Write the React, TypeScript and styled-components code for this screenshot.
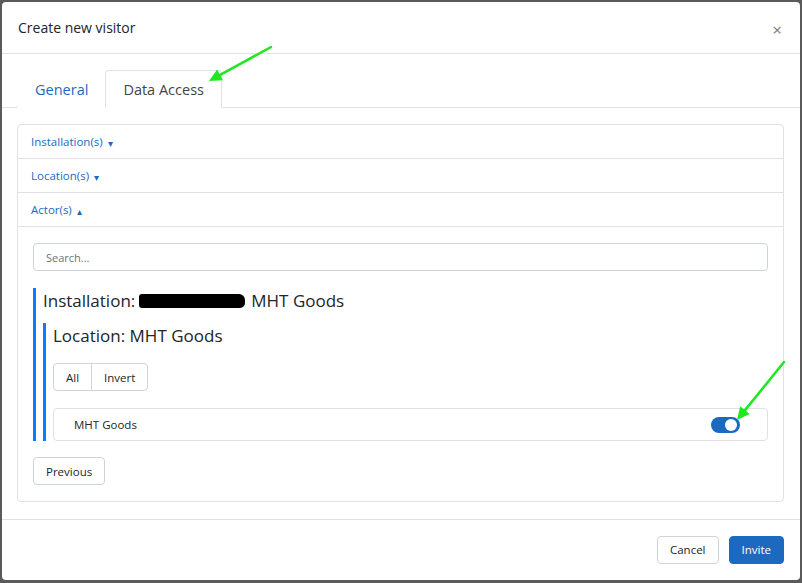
import React from "react";
import styled, { createGlobalStyle } from "styled-components";

const GlobalStyle = createGlobalStyle`
  html, body {
    margin: 0;
    padding: 0;
    background: #5a5a5a;
    font-family: "Open Sans", "Noto Sans", sans-serif;
  }
  * { box-sizing: border-box; }
`;

const BLUE = "#1b6ac0";

const Page = styled.div`
  position: relative;
  width: 802px;
  height: 583px;
  padding: 2px 2px 3px 2px;
`;

const Modal = styled.div`
  width: 798px;
  height: 578px;
  background: #fff;
  border-radius: 4px;
  display: flex;
  flex-direction: column;
  color: #212529;
`;

const Header = styled.div`
  height: 52px;
  padding: 0 16px;
  border-bottom: 1px solid #dee2e6;
  display: flex;
  align-items: center;
  justify-content: space-between;
`;

const Title = styled.div`
  font-size: 14px;
  color: #212529;
`;

const Close = styled.span`
  font-size: 17px;
  color: #7a7a7a;
  line-height: 1;
  margin-right: 2px;
  margin-top: 4px;
`;

const TabNav = styled.div`
  display: flex;
  padding: 16px 16px 0 16px;
  border-bottom: 1px solid #dee2e6;
`;

const Tab = styled.div<{ active?: boolean }>`
  height: 38px;
  margin-bottom: -1px;
  padding: 0 ${({ active }) => (active ? "17px" : "16px")};
  display: flex;
  align-items: center;
  font-size: 14.5px;
  color: ${({ active }) => (active ? "#444" : BLUE)};
  background: #fff;
  border: 1px solid ${({ active }) => (active ? "#dee2e6" : "transparent")};
  border-bottom-color: ${({ active }) => (active ? "#fff" : "transparent")};
  border-radius: 4px 4px 0 0;
`;

const Body = styled.div`
  flex: 1;
  padding: 16px 16px 17px 15px;
`;

const Card = styled.div`
  border: 1px solid #dee2e6;
  border-radius: 4px;
  height: 378px;
`;

const SectionHead = styled.div`
  height: 34px;
  padding: 0 13px;
  display: flex;
  align-items: center;
  gap: 5px;
  font-size: 11.5px;
  color: ${BLUE};
  border-bottom: 1px solid #dee2e6;
`;

const Caret = styled.span`
  font-size: 10px;
  margin-top: 2px;
`;

const SectionBody = styled.div`
  padding: 16px 15px;
`;

const Search = styled.input`
  width: 100%;
  height: 28px;
  border: 1px solid #ced4da;
  border-radius: 4px;
  padding: 0 12px;
  font-family: inherit;
  font-size: 11px;
  outline: none;
  &::placeholder { color: #6c757d; }
`;

const Group = styled.div<{ nested?: boolean }>`
  margin-top: ${({ nested }) => (nested ? "10px" : "17px")};
  border-left: 3px solid #0d7bff;
  padding-left: 7px;
`;

const GroupTitle = styled.div`
  font-size: 17px;
  color: #212529;
  height: 25px;
  display: flex;
  align-items: center;
  gap: 4px;
`;

const Redacted = styled.span`
  display: inline-block;
  width: 106px;
  height: 14px;
  background: #000;
  border-radius: 3px 6px 5px 3px;
  margin: 0 2px 0 0;
`;

const BtnGroup = styled.div`
  display: inline-flex;
  margin-top: 15px;
  border: 1px solid #ced4da;
  border-radius: 4px;
`;

const GroupBtn = styled.div`
  height: 26px;
  display: flex;
  align-items: center;
  padding: 0 12px;
  font-size: 11.5px;
  color: #212529;
  & + & { border-left: 1px solid #ced4da; }
`;

const ItemRow = styled.div`
  margin-top: 17px;
  height: 33px;
  border: 1px solid #dee2e6;
  border-radius: 4px;
  display: flex;
  align-items: center;
  justify-content: space-between;
  padding: 0 27px 0 20px;
  font-size: 11.5px;
  color: #212529;
`;

const Toggle = styled.span`
  width: 29px;
  height: 16px;
  border-radius: 8px;
  background: #1b6ac0;
  position: relative;
  &::after {
    content: "";
    position: absolute;
    right: 3px;
    top: 2px;
    width: 12px;
    height: 12px;
    border-radius: 50%;
    background: #fff;
  }
`;

const Button = styled.button<{ primary?: boolean }>`
  height: 28px;
  padding: 0 12px;
  font-family: inherit;
  font-size: 11.5px;
  border-radius: 4px;
  border: 1px solid ${({ primary }) => (primary ? "#1b6ac0" : "#ced4da")};
  background: ${({ primary }) => (primary ? "#1b6ac0" : "#fff")};
  color: ${({ primary }) => (primary ? "#fff" : "#212529")};
`;

const PrevWrap = styled.div`
  margin-top: 16px;
`;

const Footer = styled.div`
  height: 61px;
  border-top: 1px solid #dee2e6;
  display: flex;
  align-items: center;
  justify-content: flex-end;
  gap: 10px;
  padding: 0 16px 1px 0;
`;

const Annotations = styled.svg`
  position: absolute;
  left: 0;
  top: 0;
  pointer-events: none;
`;

const Arrow = ({ x1, y1, x2, y2 }: { x1: number; y1: number; x2: number; y2: number }) => {
  const a = Math.atan2(y2 - y1, x2 - x1);
  const len = 14;
  const w = 0.45;
  const p1 = [x2 - len * Math.cos(a - w), y2 - len * Math.sin(a - w)];
  const p2 = [x2 - len * Math.cos(a + w), y2 - len * Math.sin(a + w)];
  return (
    <g>
      <line x1={x1} y1={y1} x2={x2 - 6 * Math.cos(a)} y2={y2 - 6 * Math.sin(a)} stroke="#1ee81e" strokeWidth={2.5} strokeLinecap="round" />
      <polygon points={`${x2},${y2} ${p1[0]},${p1[1]} ${p2[0]},${p2[1]}`} fill="#1ee81e" />
    </g>
  );
};

export default function App() {
  return (
    <Page>
      <GlobalStyle />
      <Modal>
        <Header>
          <Title>Create new visitor</Title>
          <Close>×</Close>
        </Header>
        <TabNav>
          <Tab>General</Tab>
          <Tab active>Data Access</Tab>
        </TabNav>
        <Body>
          <Card>
            <SectionHead>
              Installation(s) <Caret>▾</Caret>
            </SectionHead>
            <SectionHead>
              Location(s) <Caret>▾</Caret>
            </SectionHead>
            <SectionHead>
              Actor(s) <Caret>▴</Caret>
            </SectionHead>
            <SectionBody>
              <Search placeholder="Search..." />
              <Group>
                <GroupTitle>
                  Installation: <Redacted /> MHT Goods
                </GroupTitle>
                <Group nested>
                  <GroupTitle>Location: MHT Goods</GroupTitle>
                  <BtnGroup>
                    <GroupBtn>All</GroupBtn>
                    <GroupBtn>Invert</GroupBtn>
                  </BtnGroup>
                  <ItemRow>
                    MHT Goods
                    <Toggle />
                  </ItemRow>
                </Group>
              </Group>
              <PrevWrap>
                <Button>Previous</Button>
              </PrevWrap>
            </SectionBody>
          </Card>
        </Body>
        <Footer>
          <Button>Cancel</Button>
          <Button primary>Invite</Button>
        </Footer>
      </Modal>
      <Annotations width={802} height={583}>
        <Arrow x1={271} y1={47} x2={209} y2={81} />
        <Arrow x1={784} y1={362} x2={737} y2={420} />
      </Annotations>
    </Page>
  );
}
